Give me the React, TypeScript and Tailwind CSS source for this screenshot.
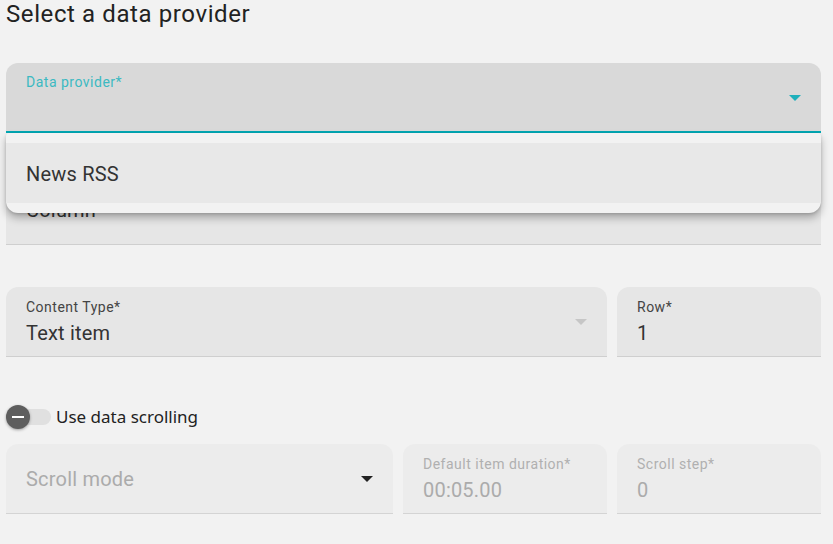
import React from "react";

const Arrow = ({ color }: { color: string }) => (
  <svg width="12" height="6" viewBox="0 0 12 6" className="absolute right-[20px] top-[32px]">
    <path d="M0 0 L12 0 L6 6 Z" fill={color} />
  </svg>
);

type FieldProps = {
  label?: string;
  value?: string;
  placeholder?: string;
  className?: string;
  bg: string;
  border: string;
  labelColor: string;
  valueColor: string;
  arrow?: string;
};

const Field = ({ label, value, placeholder, className = "", bg, border, labelColor, valueColor, arrow }: FieldProps) => (
  <div className={`relative h-[70px] rounded-t-[12px] px-[20px] ${bg} ${border} ${className}`}>
    {placeholder ? (
      <div className={`flex h-full items-center text-[20px] leading-[24px] tracking-[0.2px] ${valueColor}`}>{placeholder}</div>
    ) : (
      <div className="flex flex-col pt-[11px]">
        <div className={`text-[14px] leading-[18px] tracking-[0.5px] ${labelColor}`}>{label}</div>
        <div className={`mt-[5px] text-[20px] leading-[24px] tracking-[0.2px] ${valueColor}`}>{value}</div>
      </div>
    )}
    {arrow && <Arrow color={arrow} />}
  </div>
);

export default function App() {
  return (
    <div
      className="relative h-[544px] w-[833px] overflow-hidden bg-[#f2f2f2] pl-[6px] pr-[12px]"
      style={{ fontFamily: "Roboto, 'Liberation Sans', sans-serif" }}
    >
      <div className="h-[63px] text-[24px] leading-[28px] tracking-[0.6px] text-[#222222]">Select a data provider</div>

      <div className="relative h-[70px] rounded-t-[12px] border-b-2 border-[#00a8b4] bg-[#d9d9d9] px-[20px]">
        <div className="pt-[10px] text-[14px] leading-[18px] tracking-[0.5px] text-[#3cb9c2]">Data provider*</div>
        <Arrow color="#1fb0bb" />
      </div>

      <Field
        className="mt-[42px]"
        placeholder="Column"
        bg="bg-[#e6e6e6]"
        border="border-b border-[#cfcfcf]"
        labelColor="text-[#444]"
        valueColor="text-[#333]"
      />

      <div className="mt-[42px] flex gap-[10px]">
        <Field
          className="flex-1"
          label="Content Type*"
          value="Text item"
          bg="bg-[#e6e6e6]"
          border="border-b border-[#cfcfcf]"
          labelColor="text-[#444]"
          valueColor="text-[#333]"
          arrow="#c6c6c6"
        />
        <Field
          className="w-[204px]"
          label="Row*"
          value="1"
          bg="bg-[#e6e6e6]"
          border="border-b border-[#cfcfcf]"
          labelColor="text-[#444]"
          valueColor="text-[#333]"
        />
      </div>

      <div className="mt-[48px] flex h-[24px] items-center">
        <div className="relative h-[24px] w-[46px]">
          <div className="absolute left-[13px] top-[4px] h-[16px] w-[32px] rounded-full bg-[#e0e0e0]" />
          <div className="absolute left-0 top-0 flex h-[24px] w-[24px] items-center justify-center rounded-full bg-[#5e5e5e] shadow-[0_1px_3px_rgba(0,0,0,0.35)]">
            <div className="h-[2px] w-[12px] bg-white" />
          </div>
        </div>
        <div
          className="ml-[4px] text-[17px] leading-[24px] text-[#222]"
          style={{ fontFamily: "'Noto Sans', 'Open Sans', sans-serif" }}
        >
          Use data scrolling
        </div>
      </div>

      <div className="mt-[15px] flex gap-[10px]">
        <Field
          className="flex-1"
          placeholder="Scroll mode"
          bg="bg-[#ececec]"
          border="border-b border-[#d4d4d4]"
          labelColor="text-[#b0b0b0]"
          valueColor="text-[#ababab]"
          arrow="#222"
        />
        <Field
          className="w-[204px]"
          label="Default item duration*"
          value="00:05.00"
          bg="bg-[#ececec]"
          border="border-b border-[#d4d4d4]"
          labelColor="text-[#b0b0b0]"
          valueColor="text-[#ababab]"
        />
        <Field
          className="w-[204px]"
          label="Scroll step*"
          value="0"
          bg="bg-[#ececec]"
          border="border-b border-[#d4d4d4]"
          labelColor="text-[#b0b0b0]"
          valueColor="text-[#ababab]"
        />
      </div>

      <div className="absolute left-[6px] top-[133px] h-[80px] w-[815px] rounded-b-[12px] rounded-t-[3px] bg-[#f2f2f2] py-[10px] shadow-[0_5px_8px_rgba(0,0,0,0.28),0_1px_3px_rgba(0,0,0,0.15)]">
        <div className="flex h-[60px] items-center bg-[#e8e8e8] px-[20px] pt-[2px] text-[20px] leading-[24px] tracking-[0.2px] text-[#333]">
          News RSS
        </div>
      </div>
    </div>
  );
}
